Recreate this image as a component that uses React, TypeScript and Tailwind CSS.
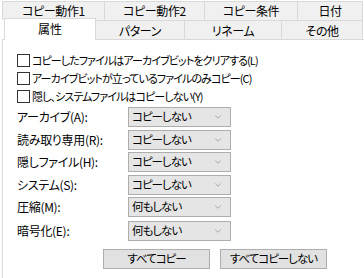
import { ChevronDown } from "lucide-react";

const topTabs = [
  { label: "コピー動作1", w: "w-[103px]" },
  { label: "コピー動作2", w: "w-[101px]" },
  { label: "コピー条件", w: "w-[94px]" },
  { label: "日付", w: "w-[66px]" },
];

const bottomTabs = [
  { label: "パターン", w: "w-[90px]" },
  { label: "リネーム", w: "w-[98px]" },
  { label: "その他", w: "w-[82px]" },
];

const checks = [
  "コピーしたファイルはアーカイブビットをクリアする(L)",
  "アーカイブビットが立っているファイルのみコピー(C)",
  "隠し、システムファイルはコピーしない(Y)",
];

const selects = [
  { label: "アーカイブ(A):", value: "コピーしない", mt: "mt-[4px]" },
  { label: "読み取り専用(R):", value: "コピーしない", mt: "mt-[3px]" },
  { label: "隠しファイル(H):", value: "コピーしない", mt: "mt-[2px]" },
  { label: "システム(S):", value: "コピーしない", mt: "mt-[3px]" },
  { label: "圧縮(M):", value: "何もしない", mt: "mt-[2px]" },
  { label: "暗号化(E):", value: "何もしない", mt: "mt-[4px]" },
];

export default function App() {
  return (
    <div className="w-[364px] h-[278px] overflow-hidden bg-white text-[12px] leading-none text-black font-['Noto_Sans_CJK_JP',sans-serif] [font-feature-settings:'palt']">
      {/* Tab rows */}
      <div className="flex pl-[2px] pt-[1px]">
        {topTabs.map((t, i) => (
          <div
            key={i}
            className={`${t.w} h-[19px] -mr-px flex items-center justify-center border-t border-x border-[#d9d9d9] bg-[#f0f0f0] tracking-[-0.4px]`}
          >
            {t.label}
          </div>
        ))}
      </div>
      <div className="flex h-[19px] pl-[4px]">
        <div className="relative z-10 -top-[2px] w-[92px] h-[22px] -mr-px flex items-start justify-center pt-[4px] border-t border-x border-[#d9d9d9] bg-white">
          属性
        </div>
        {bottomTabs.map((t, i) => (
          <div
            key={i}
            className={`${t.w} h-[19px] -mr-px flex items-center justify-center pt-[2px] border-t border-x border-[#d9d9d9] bg-[#f0f0f0] tracking-[-0.4px]`}
          >
            {t.label}
          </div>
        ))}
      </div>

      {/* Panel */}
      <div className="ml-[2px] h-[240px] border-t border-l border-[#d9d9d9] pl-[14px] pt-[14px]">
        <div className="flex flex-col gap-[5px]">
          {checks.map((c, i) => (
            <div key={i} className="flex items-center h-[13px]">
              <div className="w-[13px] h-[13px] border border-[#333333] bg-white" />
              <span className="ml-[2px] text-[11px] tracking-[-0.9px]">{c}</span>
            </div>
          ))}
        </div>

        <div className="flex flex-col">
          {selects.map((s, i) => (
            <div key={i} className={`flex items-center ${s.mt}`}>
              <div className="w-[111px] tracking-[-0.3px]">{s.label}</div>
              <div className="w-[103px] h-[20px] flex items-center justify-between pl-[3px] pr-[7px] border border-[#adadad] bg-[#e5e5e5]">
                <span className="text-[11.5px] tracking-[-1px]">{s.value}</span>
                <ChevronDown className="w-[10px] h-[10px] text-[#707070]" strokeWidth={1.25} />
              </div>
            </div>
          ))}
        </div>

        <div className="flex gap-[10px] ml-[86px] mt-[8px]">
          <div className="w-[107px] h-[20px] flex items-center justify-center border border-[#adadad] bg-[#e1e1e1] text-[11.5px] tracking-[-1px]">
            すべてコピー
          </div>
          <div className="w-[107px] h-[20px] flex items-center justify-center border border-[#adadad] bg-[#e1e1e1] text-[11.5px] tracking-[-1px]">
            すべてコピーしない
          </div>
        </div>
      </div>
    </div>
  );
}
